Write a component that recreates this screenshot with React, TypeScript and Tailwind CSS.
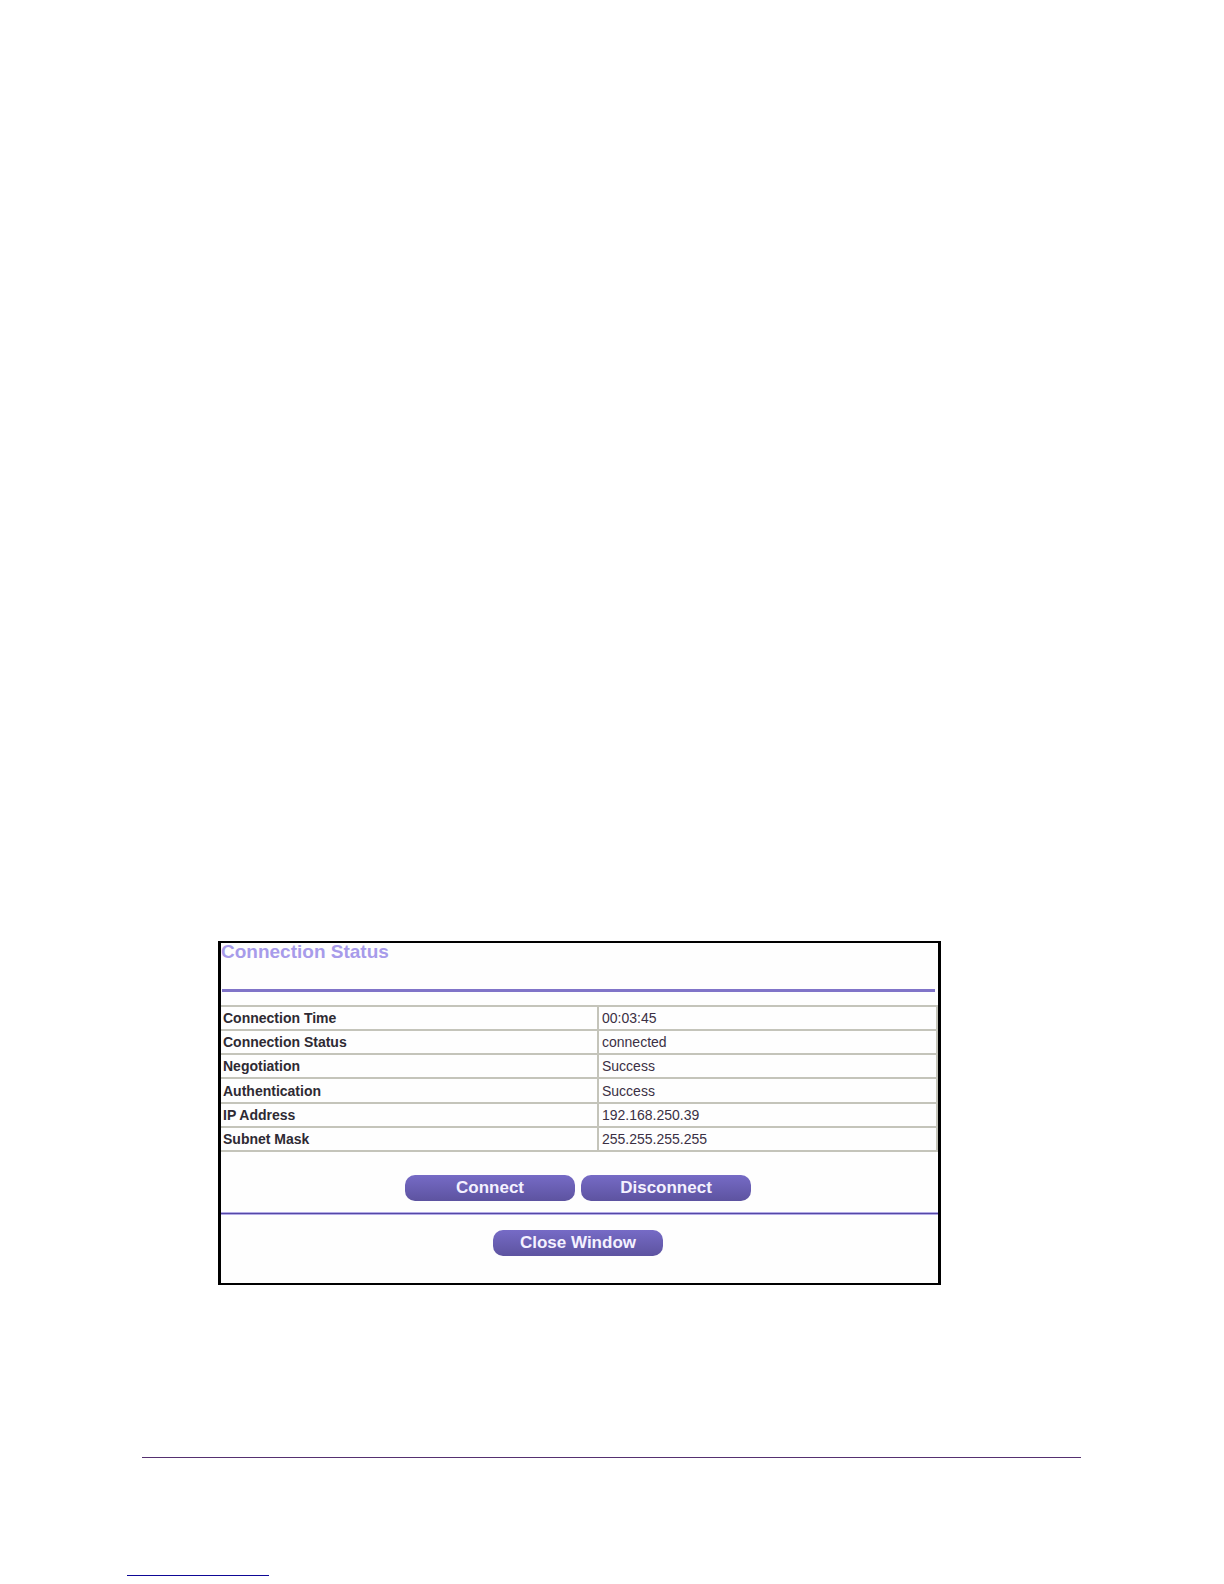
type StatusRow = { label: string; value: string };

const rows: StatusRow[] = [
  { label: "Connection Time", value: "00:03:45" },
  { label: "Connection Status", value: "connected" },
  { label: "Negotiation", value: "Success" },
  { label: "Authentication", value: "Success" },
  { label: "IP Address", value: "192.168.250.39" },
  { label: "Subnet Mask", value: "255.255.255.255" },
];

function PillButton({ children }: { children: string }) {
  return (
    <button
      type="button"
      className="h-[26px] w-[170px] rounded-[10px] bg-linear-to-b from-[#766bc6] to-[#5d53a0] text-center text-[17px] leading-6 font-bold text-[#f4f1ff]"
    >
      {children}
    </button>
  );
}

export default function App() {
  return (
    <div className="min-h-screen bg-white pt-[941px] font-['Liberation_Sans',Arial,sans-serif]">
      {/* Status window */}
      <main className="mr-[283px] ml-[218px] border-x-3 border-y-2 border-black bg-[#fefefe] pb-[27px]">
        <h1 className="text-[19px] leading-[18px] font-bold text-[#a79bea]">Connection Status</h1>

        <hr className="mt-7 mr-[3px] ml-px border-0 border-t-3 border-[#8074c8]" />

        <table className="mt-[13px] h-[147px] w-full table-fixed border-collapse text-[14px] leading-4 text-[#3b3044]">
          <colgroup>
            <col className="w-[377px]" />
            <col />
          </colgroup>
          <tbody>
            {rows.map((row) => (
              <tr key={row.label} className="border-y-2 border-[#c4c4ba]">
                <th scope="row" className="p-0 pl-[2px] text-left font-bold text-[#2e2a33]">
                  {row.label}
                </th>
                <td className="border-x-2 border-[#c4c4ba] p-0 pl-[3px]">{row.value}</td>
              </tr>
            ))}
          </tbody>
        </table>

        <div className="mt-[23px] flex justify-center gap-[6px] pr-[3px]">
          <PillButton>Connect</PillButton>
          <PillButton>Disconnect</PillButton>
        </div>

        <hr className="mt-[11px] h-[3px] border-0 border-y border-[#b3abe6] bg-[#5548a6]" />

        <div className="mt-[15px] flex justify-center pr-[3px]">
          <PillButton>Close Window</PillButton>
        </div>
      </main>

      {/* Page footer */}
      <footer className="pt-[172px]">
        <hr className="mr-[143px] ml-[142px] border-0 border-t border-[#553070]" />
        <hr className="mt-[117px] ml-[127px] w-[142px] border-0 border-t border-[#0e0896]" />
      </footer>
    </div>
  );
}
